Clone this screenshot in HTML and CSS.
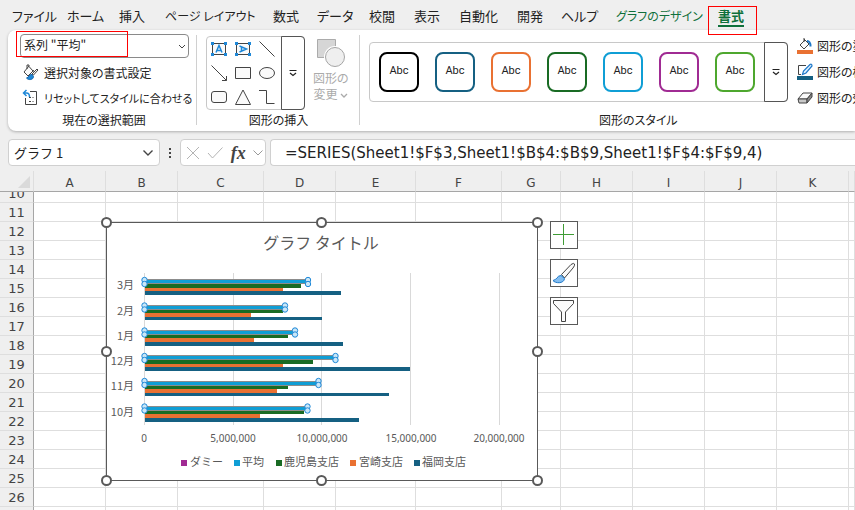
FILE: index.html
```html
<!DOCTYPE html>
<html lang="ja">
<head>
<meta charset="utf-8">
<meta name="viewport" content="width=device-width, initial-scale=1">
<title>グラフ 1</title>
<link rel="stylesheet" href="styles.css">
</head>
<body>
<nav class="tabs">
  <a href="#">ファイル</a>
  <a href="#">ホーム</a>
  <a href="#">挿入</a>
  <a href="#" class="long">ページ レイアウト</a>
  <a href="#">数式</a>
  <a href="#">データ</a>
  <a href="#">校閲</a>
  <a href="#">表示</a>
  <a href="#">自動化</a>
  <a href="#">開発</a>
  <a href="#">ヘルプ</a>
  <a href="#" class="context long">グラフのデザイン</a>
  <a href="#" class="context active">書式</a>
</nav>

<section class="ribbon">
  <div class="group selection">
    <div class="combo">
      <select aria-label="グラフ要素"><option>系列 "平均"</option></select>
      <svg class="combo-arrow" width="8" height="6" viewBox="0 0 8 6"><path d="M1 1 4 4 7 1" class="ln"/></svg>
      <span class="mark"></span>
    </div>
    <button class="command">
      <svg width="18" height="18" viewBox="0 0 18 18"><path d="M7 2 2 8l4 4 5-5-4-4.500V1H5v4" class="ln fill"/><path d="m11 6 2 3" class="ln"/><path d="m15 5 1 1-4.500 5-1.500-1z" class="ln fill"/><path d="M10 10.500c-3-.5-3 3-5.500 3.500 2 2.500 7 2 7-1.500z" fill="#1e88d8" stroke="#1565ad"/></svg>
      <span>選択対象の書式設定</span>
    </button>
    <button class="command">
      <svg width="18" height="18" viewBox="0 0 18 18"><path d="M8 2.500h6.500v13h-11V9" class="ln"/><path d="M7 8.500h2M7 12.500h2M10.500 8.500h1M10.500 12.500h1" class="ln"/><path d="M4.500 1 1.500 4l3 3M1.500 4h3q3 0 3 4" fill="none" stroke="#1e88d8" stroke-width="1.500"/></svg>
      <span class="compact">リセットしてスタイルに合わせる</span>
    </button>
    <h2>現在の選択範囲</h2>
  </div>

  <div class="group insert">
    <div class="insert-row">
      <div class="shape-gallery">
        <div class="shapes">
          <button aria-label="テキスト ボックス"><svg width="18" height="16" viewBox="0 0 18 16"><path d="M2.500 2.500h13v11h-13z" class="ln fill"/><path d="M6 11.500 9 4.500l3 7M7 9.500h4" class="blue"/><path d="M1 1h3v3H1zM14 1h3v3h-3zM1 12h3v3H1zM14 12h3v3h-3z" class="dot"/></svg></button>
          <button aria-label="縦書きテキスト ボックス"><svg width="18" height="16" viewBox="0 0 18 16"><path d="M2.500 2.500h13v11h-13z" class="ln fill"/><path d="m5.500 5 7 3-7 3M7.500 6v4" class="blue"/><path d="M1 1h3v3H1zM14 1h3v3h-3zM1 12h3v3H1zM14 12h3v3h-3z" class="dot"/></svg></button>
          <button aria-label="線"><svg width="18" height="16" viewBox="0 0 18 16"><path d="m1.500.5 15 15" class="ln"/></svg></button>
          <button aria-label="矢印"><svg width="18" height="16" viewBox="0 0 18 16"><path d="m1.500.5 15 15M16.500 11v4.500H12" class="ln"/></svg></button>
          <button aria-label="四角形"><svg width="18" height="16" viewBox="0 0 18 16"><path d="M1.500 2.500h15v11h-15z" class="ln fill"/></svg></button>
          <button aria-label="楕円"><svg width="18" height="16" viewBox="0 0 18 16"><ellipse cx="9" cy="8" rx="7.500" ry="5.500" class="ln fill"/></svg></button>
          <button aria-label="角丸四角形"><svg width="18" height="16" viewBox="0 0 18 16"><rect x="1.500" y="2.500" width="15" height="11" rx="2.500" class="ln fill"/></svg></button>
          <button aria-label="三角形"><svg width="18" height="16" viewBox="0 0 18 16"><path d="M9 1 16.500 15.500h-15z" class="ln fill"/></svg></button>
          <button aria-label="コネクタ"><svg width="18" height="16" viewBox="0 0 18 16"><path d="M1 1.500h7.500v13h8" class="ln"/></svg></button>
        </div>
        <button class="more" aria-label="その他の図形"><svg width="8" height="8" viewBox="0 0 8 8"><path d="M.5 1.500h7M1 4l3 2.500L7 4" class="ln strong"/></svg></button>
      </div>
      <button class="change" disabled>
        <svg width="30" height="30" viewBox="0 0 30 30"><path d="M1.500 1.500h18v18h-18z" fill="#d6d6d6" stroke="#ababab"/><circle cx="19" cy="19" r="11" fill="#fff"/><circle cx="19" cy="19" r="9.500" fill="#efefef" stroke="#a5a5a5"/></svg>
        <span>図形の</span>
        <span>変更 <svg width="8" height="6" viewBox="0 0 8 6"><path d="M1 1l3 3 3-3" fill="none" stroke="#aaa" stroke-width="1.300"/></svg></span>
      </button>
    </div>
    <h2>図形の挿入</h2>
  </div>

  <div class="group styles">
    <div class="style-gallery">
      <div class="cards">
        <button class="card black">Abc</button>
        <button class="card navy">Abc</button>
        <button class="card orange">Abc</button>
        <button class="card green">Abc</button>
        <button class="card sky">Abc</button>
        <button class="card purple">Abc</button>
        <button class="card lime">Abc</button>
      </div>
      <button class="more" aria-label="その他のスタイル"><svg width="8" height="8" viewBox="0 0 8 8"><path d="M.5 1.500h7M1 4l3 2.500L7 4" class="ln strong"/></svg></button>
    </div>
    <h2>図形のスタイル</h2>
  </div>

  <div class="group effects">
    <button class="command">
      <svg width="16" height="18" viewBox="0 0 16 18"><path d="m8 3-5 5 4 4 5-5-5-5" class="ln fill"/><path d="M7 5V1" class="ln"/><path d="M10 4c3 0 3.500 3 3.500 5.500" fill="none" stroke="#1e78c8" stroke-width="2"/><path d="M0 13h16v4H0z" fill="#e97132"/></svg>
      <span>図形の塗りつぶし</span>
    </button>
    <button class="command">
      <svg width="16" height="18" viewBox="0 0 16 18"><path d="M9 2.500H1.500v9H4" class="ln"/><path d="M5.500 11.500 6.500 8 13 1.500q2-1 2 1.500L9 10z" fill="#dcefff" stroke="#1e78c8" stroke-width="1.200"/><path d="M0 13h16v4H0z" fill="#156082"/></svg>
      <span>図形の枠線</span>
    </button>
    <button class="command">
      <svg width="16" height="18" viewBox="0 0 16 18"><path d="m1 10 5-6h9l-5 6z" fill="#fafafa" stroke="#444"/><path d="M1 10h9v4H2z" fill="#c8c8c8" stroke="#444"/><path d="m10 10 5-6v4l-5 6z" fill="#888" stroke="#444"/></svg>
      <span>図形の効果</span>
    </button>
  </div>
</section>

<section class="formula-bar">
  <div class="name-box">
    <input type="text" value="グラフ 1" aria-label="名前ボックス">
    <svg width="12" height="8" viewBox="0 0 12 8"><path d="m1.500 1.500 4.500 4.500 4.500-4.500" fill="none" stroke="#444" stroke-width="1.400"/></svg>
  </div>
  <svg class="grip" width="4" height="12" viewBox="0 0 4 12"><path d="M1 1h2v2H1zM1 5h2v2H1zM1 9h2v2H1z" fill="#444"/></svg>
  <div class="entry-buttons">
    <button aria-label="キャンセル"><svg width="14" height="14" viewBox="0 0 14 14"><path d="m1 1 12 12M13 1 1 13" fill="none" stroke="#b4b4b4"/></svg></button>
    <button aria-label="入力"><svg width="16" height="14" viewBox="0 0 16 14"><path d="m1 7 4.500 5L15.500 1.500" fill="none" stroke="#b4b4b4"/></svg></button>
    <button class="fx" aria-label="関数の挿入">fx</button>
    <svg width="10" height="8" viewBox="0 0 10 8"><path d="m.5 1.500 4.500 4.500 4.500-4.500" fill="none" stroke="#999"/></svg>
  </div>
  <input class="formula" type="text" aria-label="数式バー" value="=SERIES(Sheet1!$F$3,Sheet1!$B$4:$B$9,Sheet1!$F$4:$F$9,4)">
</section>

<main class="sheet">
  <table>
    <colgroup><col class="rowhead"><col class="w72"><col class="w72"><col class="w86"><col class="w72"><col class="w80"><col class="w86"><col class="w59"><col class="w72"><col class="w72"><col class="w72"><col class="w72"><col></colgroup>
    <thead><tr><th class="corner"><svg width="12" height="12" viewBox="0 0 12 12"><path d="M12 0v12H0z" fill="#dadada"/></svg></th><th>A</th><th>B</th><th>C</th><th>D</th><th>E</th><th>F</th><th>G</th><th>H</th><th>I</th><th>J</th><th>K</th><th></th></tr></thead>
    <tbody>
      <tr class="cut"><th><span>10</span></th><td></td><td></td><td></td><td></td><td></td><td></td><td></td><td></td><td></td><td></td><td></td><td></td></tr>
      <tr><th>11</th><td></td><td></td><td></td><td></td><td></td><td></td><td></td><td></td><td></td><td></td><td></td><td></td></tr>
      <tr><th>12</th><td></td><td></td><td></td><td></td><td></td><td></td><td></td><td></td><td></td><td></td><td></td><td></td></tr>
      <tr><th>13</th><td></td><td></td><td></td><td></td><td></td><td></td><td></td><td></td><td></td><td></td><td></td><td></td></tr>
      <tr><th>14</th><td></td><td></td><td></td><td></td><td></td><td></td><td></td><td></td><td></td><td></td><td></td><td></td></tr>
      <tr><th>15</th><td></td><td></td><td></td><td></td><td></td><td></td><td></td><td></td><td></td><td></td><td></td><td></td></tr>
      <tr><th>16</th><td></td><td></td><td></td><td></td><td></td><td></td><td></td><td></td><td></td><td></td><td></td><td></td></tr>
      <tr><th>17</th><td></td><td></td><td></td><td></td><td></td><td></td><td></td><td></td><td></td><td></td><td></td><td></td></tr>
      <tr><th>18</th><td></td><td></td><td></td><td></td><td></td><td></td><td></td><td></td><td></td><td></td><td></td><td></td></tr>
      <tr><th>19</th><td></td><td></td><td></td><td></td><td></td><td></td><td></td><td></td><td></td><td></td><td></td><td></td></tr>
      <tr><th>20</th><td></td><td></td><td></td><td></td><td></td><td></td><td></td><td></td><td></td><td></td><td></td><td></td></tr>
      <tr><th>21</th><td></td><td></td><td></td><td></td><td></td><td></td><td></td><td></td><td></td><td></td><td></td><td></td></tr>
      <tr><th>22</th><td></td><td></td><td></td><td></td><td></td><td></td><td></td><td></td><td></td><td></td><td></td><td></td></tr>
      <tr><th>23</th><td></td><td></td><td></td><td></td><td></td><td></td><td></td><td></td><td></td><td></td><td></td><td></td></tr>
      <tr><th>24</th><td></td><td></td><td></td><td></td><td></td><td></td><td></td><td></td><td></td><td></td><td></td><td></td></tr>
      <tr><th>25</th><td></td><td></td><td></td><td></td><td></td><td></td><td></td><td></td><td></td><td></td><td></td><td></td></tr>
      <tr><th>26</th><td></td><td></td><td></td><td></td><td></td><td></td><td></td><td></td><td></td><td></td><td></td><td></td></tr>
      <tr><th></th><td></td><td></td><td></td><td></td><td></td><td></td><td></td><td></td><td></td><td></td><td></td><td></td></tr>
    </tbody>
  </table>

  <div class="chart-object">
    <svg width="444" height="272" viewBox="100 215 444 272" role="img" aria-label="グラフ タイトル">
      <defs><g id="knob"><circle cy="-2" r="2.700"/><circle cy="2" r="2.700"/></g></defs>
      <path d="M106.500 222.500h431v258h-431z" fill="#fff" stroke="#595959"/>
      <text x="321" y="249" class="chart-title">グラフ タイトル</text>
      <path d="M144.500 273v152M233.500 273v152M321.500 273v152M410.500 273v152M499.500 273v152" stroke="#d9d9d9"/>
      <path fill="#156082" d="M145 291h196v4H145zM145 317h177v3H145zM145 342h198v4H145zM145 367h265v4H145zM145 393h244v3H145zM145 418h214v4H145z"/>
      <path fill="#e97132" d="M145 288h138v3H145zM145 313h106v4H145zM145 338h109v4H145zM145 364h138v3H145zM145 389h132v4H145zM145 414h115v4H145z"/>
      <path fill="#196b24" d="M145 284h156v4H145zM145 310h138v3H145zM145 335h143v3H145zM145 360h168v4H145zM145 386h143v3H145zM145 411h159v3H145z"/>
      <g fill="#0f9ed5" stroke="#8c8c8c">
        <path d="M144.500 279.500h164v4h-164zM144.500 305.500h141v4h-141zM144.500 330.500h151v4h-151zM144.500 355.500h191v4h-191zM144.500 381.500h174v4h-174zM144.500 406.500h163v4h-163z"/>
      </g>
      <g class="knobs">
        <use href="#knob" x="144.500" y="282"/><use href="#knob" x="308" y="282"/>
        <use href="#knob" x="144.500" y="307.500"/><use href="#knob" x="285" y="307.500"/>
        <use href="#knob" x="144.500" y="332.500"/><use href="#knob" x="295" y="332.500"/>
        <use href="#knob" x="144.500" y="358"/><use href="#knob" x="335.500" y="358"/>
        <use href="#knob" x="144.500" y="383"/><use href="#knob" x="318.500" y="383"/>
        <use href="#knob" x="144.500" y="408.500"/><use href="#knob" x="307.500" y="408.500"/>
      </g>
      <g class="months">
        <text x="134" y="289">3月</text><text x="134" y="315">2月</text><text x="134" y="340">1月</text>
        <text x="134" y="365">12月</text><text x="134" y="390">11月</text><text x="134" y="416">10月</text>
      </g>
      <g class="values">
        <text x="144" y="442">0</text><text x="233" y="442">5,000,000</text><text x="322" y="442">10,000,000</text><text x="411" y="442">15,000,000</text><text x="499" y="442">20,000,000</text>
      </g>
      <g class="legend">
        <path d="M181 460h6v6h-6z" fill="#a02b93"/><text x="190" y="466">ダミー</text>
        <path d="M234 460h6v6h-6z" fill="#0f9ed5"/><text x="242" y="466">平均</text>
        <path d="M276 460h6v6h-6z" fill="#196b24"/><text x="284" y="466">鹿児島支店</text>
        <path d="M350 460h6v6h-6z" fill="#e97132"/><text x="359" y="466">宮崎支店</text>
        <path d="M414 460h6v6h-6z" fill="#156082"/><text x="422" y="466">福岡支店</text>
      </g>
      <g fill="#fff" stroke="#595959" stroke-width="2">
        <circle cx="106.500" cy="222.500" r="4.500"/><circle cx="321.500" cy="222.500" r="4.500"/><circle cx="537.500" cy="222.500" r="4.500"/>
        <circle cx="106.500" cy="351.500" r="4.500"/><circle cx="537.500" cy="351.500" r="4.500"/>
        <circle cx="106.500" cy="480.500" r="4.500"/><circle cx="321.500" cy="480.500" r="4.500"/><circle cx="537.500" cy="480.500" r="4.500"/>
      </g>
    </svg>
    <div class="chart-tools">
      <button aria-label="グラフ要素"><svg width="26" height="26" viewBox="0 0 26 26"><path d="M12.500 2v21M2 12.500h21" stroke="#3f9c35"/></svg></button>
      <button aria-label="グラフ スタイル"><svg width="26" height="26" viewBox="0 0 26 26"><path d="M10.500 14.500 20 4.500q3-2 3.500-.5T22 8l-8.500 10z" class="ln fill"/><path d="M10 15.500c-4 0-4 4.500-8 5 2 3 11 3.500 11.500-2z" fill="#83bdf0" stroke="#1e78c8"/></svg></button>
      <button aria-label="グラフ フィルター"><svg width="26" height="26" viewBox="0 0 26 26"><path d="M2.500 2.500h20v3l-8 8.500v9.500h-4V14l-8-8.500z" class="ln fill"/></svg></button>
    </div>
  </div>
</main>
</body>
</html>
```
FILE: styles.css
```css
* { box-sizing: border-box; }

body {
  margin: 0;
  height: 100vh;
  overflow: hidden;
  display: flex;
  flex-direction: column;
  background: #efefef;
  color: #222;
  font: 12px/16px "Noto Sans CJK JP", sans-serif;
  font-feature-settings: "palt";
}

button, input, select {
  font: inherit;
  font-feature-settings: inherit;
  color: inherit;
  background: none;
  border: 0;
  padding: 0;
  margin: 0;
}

svg { display: block; flex: none; }
.ln { fill: none; stroke: #444; }
.fill { fill: #fafafa; }
.strong { stroke: #222; stroke-width: 1.2; }
.blue { fill: none; stroke: #1e88d8; stroke-width: 1.5; }
.dot { fill: #1e88d8; }

/* Ribbon tabs */
.tabs {
  flex: none;
  height: 30px;
  padding-left: 12px;
  display: grid;
  grid-template-columns: 55px 52px 46px 108px 44px 52px 45px 45px 58px 44px 55px 102px 26px;
  align-items: center;
  white-space: nowrap;
  font-size: 13px;
  line-height: 20px;
}
.tabs a { color: #222; text-decoration: none; padding-top: 1px; }
.tabs .long { font-size: 12px; }
.tabs .context { color: #0f703b; }
.tabs .active { position: relative; font-weight: 700; }
.tabs .active::before {
  content: "";
  position: absolute;
  inset: 1px -13px -9px -10px;
  border: 1px solid #f00;
}
.tabs .active::after {
  content: "";
  position: absolute;
  inset: auto 0 -1px 0;
  height: 2px;
  background: #0f703b;
}

/* Ribbon */
.ribbon {
  flex: none;
  height: 101px;
  margin-left: 8px;
  display: flex;
  background: #fff;
  border-radius: 8px 0 0 8px;
  box-shadow: 0 1px 3px #0004;
  white-space: nowrap;
}
.group {
  position: relative;
  flex: none;
  display: flex;
  flex-direction: column;
  padding-bottom: 2px;
}
.group + .group::before {
  content: "";
  position: absolute;
  left: 0;
  top: 5px;
  bottom: 6px;
  border-left: 1px solid #d0d0d0;
}
.group h2 {
  margin: auto 0 0;
  font-size: 12px;
  line-height: 18px;
  font-weight: 400;
  text-align: center;
}
.selection { width: 188px; padding-left: 12px; padding-top: 4px; }
.selection h2 { margin-left: -8px; }
.combo { position: relative; width: 169px; height: 24px; margin-bottom: 2px; }
.combo select {
  appearance: none;
  width: 100%;
  height: 100%;
  padding: 0 0 2px 3px;
  border: 1px solid #8a8a8a;
  border-radius: 4px;
}
.combo-arrow { position: absolute; right: 3px; top: 10px; }
.mark { position: absolute; z-index: 1; inset: -3px 61px 1px -4px; border: 1px solid #f00; pointer-events: none; }
.command { display: flex; align-items: center; gap: 4px; height: 26px; padding-left: 2px; }
.compact { font-size: 11px; }

.insert { width: 163px; padding-left: 10px; padding-top: 6px; }
.insert-row { display: flex; align-items: flex-start; gap: 8px; }
.insert h2 { padding-right: 8px; }
.shape-gallery, .style-gallery { display: flex; border: 1px solid #c8c8c8; border-radius: 4px; }
.shape-gallery { width: 99px; height: 74px; }
.shapes { flex: 1; display: grid; grid-template-columns: repeat(3, 24px); grid-template-rows: repeat(3, 24px); }
.shapes button { display: grid; place-items: center; }
.more {
  width: 24px;
  margin: -1px;
  display: grid;
  place-items: center;
  border: 1px solid #555;
  border-radius: 0 4px 4px 0;
}
.change { color: #aaa; padding-top: 2px; }
.change > svg { margin: 0 auto 2px; }
.change span { display: block; line-height: 16px; }
.change span svg { display: inline-block; }

.styles { width: 430px; padding-left: 10px; padding-top: 12px; }
.style-gallery { width: 419px; height: 60px; }
.styles h2 { text-align: left; margin-left: 230px; }
.cards { flex: 1; display: flex; gap: 16px; padding: 9px; }
.card {
  width: 40px;
  height: 40px;
  padding-bottom: 2px;
  border: 2px solid;
  border-radius: 8px;
  color: #222;
  font: 11px/16px Roboto, sans-serif;
}
.black { border-color: #000; }
.navy { border-color: #156082; }
.orange { border-color: #e97132; }
.green { border-color: #196b24; }
.sky { border-color: #0f9ed5; }
.purple { border-color: #a02b93; }
.lime { border-color: #4ea72e; }

.effects { padding-top: 3px; padding-left: 6px; }
.group.effects::before { display: none; }

/* Formula bar */
.formula-bar {
  flex: none;
  display: flex;
  align-items: center;
  height: 27px;
  margin: 8px 0 5px 8px;
}
.name-box, .entry-buttons, .formula {
  height: 27px;
  background: #fff;
  border: 1px solid #d0d0d0;
  border-radius: 4px;
}
.name-box { width: 152px; display: flex; align-items: center; padding: 0 5px 0 5px; }
.name-box input { flex: 1; min-width: 0; font-size: 13px; font-feature-settings: normal; outline: 0; }
.grip { margin: 0 8px; }
.entry-buttons { width: 86px; display: flex; align-items: center; justify-content: space-between; padding: 0 2px 0 5px; }
.fx { font: italic bold 18px/20px "Liberation Serif", serif; color: #444; }
.formula {
  flex: 1;
  min-width: 0;
  margin-left: 4px;
  padding-left: 14px;
  border-right: 0;
  border-radius: 4px 0 0 4px;
  font-family: "DejaVu Sans", sans-serif;
  font-size: 15px;
}

/* Worksheet */
.sheet { position: relative; flex: 1; min-height: 0; overflow: hidden; }
table { width: 100%; table-layout: fixed; border-collapse: separate; border-spacing: 0; background: #fff; }
.rowhead { width: 34px; }
.w59 { width: 59px; }
.w72 { width: 72px; }
.w80 { width: 80px; }
.w86 { width: 86px; }
th, td { padding: 0; height: 19px; border: 0 solid #dedede; border-width: 0 1px 1px 0; }
th {
  background: #efefef;
  color: #444;
  font: 12px/16px "DejaVu Sans", sans-serif;
}
thead th { height: 21px; padding-top: 3px; border-bottom-color: #a6a6a6; }
thead .corner { padding: 0 3px 3px 0; border-color: #efefef #dedede #a6a6a6; vertical-align: bottom; }
.corner svg { margin-left: auto; }
tbody th { padding-top: 2px; border-right-color: #a6a6a6; font-size: 13px; }
.cut th, .cut td { height: 11px; padding: 0; }
.cut span { display: flex; align-items: flex-end; justify-content: center; height: 10px; overflow: hidden; line-height: 16px; }

.chart-object { position: absolute; left: 100px; top: 44px; display: flex; gap: 6px; }
.chart-tools { display: flex; flex-direction: column; gap: 10px; padding-top: 6px; }
.chart-tools button { width: 28px; height: 28px; background: #fff; border: 1px solid #595959; }
.chart-object text { fill: #595959; font-feature-settings: normal; }
.chart-title { font-size: 16px; text-anchor: middle; }
.months { font-size: 11px; text-anchor: end; }
.values { font: 10px "Noto Sans", sans-serif; text-anchor: middle; }
.legend { font-size: 11px; }
.knobs { fill: #c9e7f8; stroke: #1e88d8; }
```
